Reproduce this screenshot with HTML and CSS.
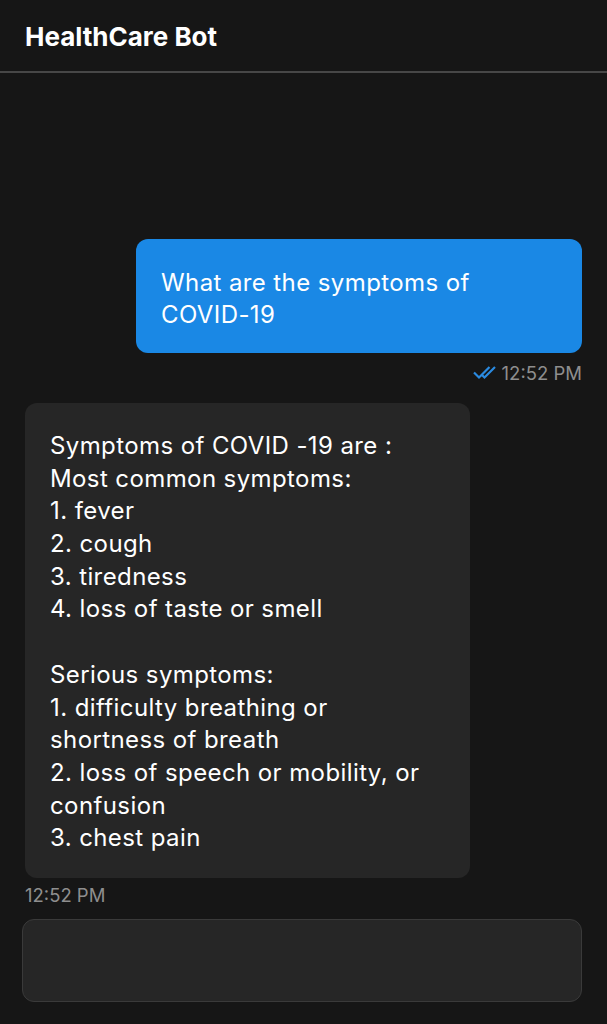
FILE: index.html
```html
<!DOCTYPE html>
<html>
<head>
<meta charset="utf-8">
<link rel="stylesheet" href="styles.css">
</head>
<body>
<div class="app">
  <header class="header">HealthCare Bot</header>
  <main class="chat">
    <div class="msg msg-user">
      <div class="bubble bubble-user">What are the symptoms of<br>COVID-19</div>
      <div class="meta meta-right">
        <svg class="ticks" width="25" height="15" viewBox="0 0 25 15"><path d="M1 7.5l5 5L16.5 2M9.5 10.5l2 2L22 2" fill="none" stroke="#2a8ae0" stroke-width="2.2"/></svg>
        <span>12:52 PM</span>
      </div>
    </div>
    <div class="msg msg-bot">
      <div class="bubble bubble-bot">Symptoms of COVID -19 are :<br>Most common symptoms:<br>1. fever<br>2. cough<br>3. tiredness<br>4. loss of taste or smell<br><br>Serious symptoms:<br>1. difficulty breathing or<br>shortness of breath<br>2. loss of speech or mobility, or<br>confusion<br>3. chest pain</div>
      <div class="meta meta-left">12:52 PM</div>
    </div>
  </main>
  <div class="composer"></div>
</div>
</body>
</html>
```

FILE: styles.css
```css
html, body {
  margin: 0;
  padding: 0;
  background: #161616;
}
body {
  font-family: Inter, "Noto Sans", sans-serif;
  color: #fff;
}
.app {
  width: 607px;
  height: 1024px;
  display: flex;
  flex-direction: column;
}
.header {
  height: 73px;
  box-sizing: border-box;
  padding: 21px 25px 0;
  font-size: 26px;
  font-weight: 700;
  line-height: 32px;
  border-bottom: 2px solid #474747;
  letter-spacing: 0;
}
.chat {
  flex: 1;
  display: flex;
  flex-direction: column;
  padding: 166px 25px 0;
}
.msg {
  display: flex;
  flex-direction: column;
}
.msg-user {
  align-items: flex-end;
}
.msg-bot {
  align-items: flex-start;
  margin-top: 18px;
}
.bubble {
  font-size: 24px;
  letter-spacing: 0.4px;
  line-height: 32.7px;
  border-radius: 12px;
}
.bubble-user {
  background: #1a88e5;
  width: 446px;
  box-sizing: border-box;
  padding: 28px 25px 22px;
  line-height: 32px;
}
.bubble-bot {
  background: #262626;
  width: 445px;
  box-sizing: border-box;
  padding: 27px 25px 23px;
}
.meta {
  font-size: 18.5px;
  color: #8e8e8e;
  display: flex;
  align-items: center;
  gap: 4px;
  line-height: 24px;
}
.meta-right {
  margin-top: 8px;
}
.meta-left {
  margin-top: 5px;
}
.ticks {
  display: block;
}
.composer {
  margin: 12px 25px 22px 22px;
  height: 83px;
  background: #262626;
  border: 1px solid #3a3a3a;
  border-radius: 12px;
  box-sizing: border-box;
}
```
